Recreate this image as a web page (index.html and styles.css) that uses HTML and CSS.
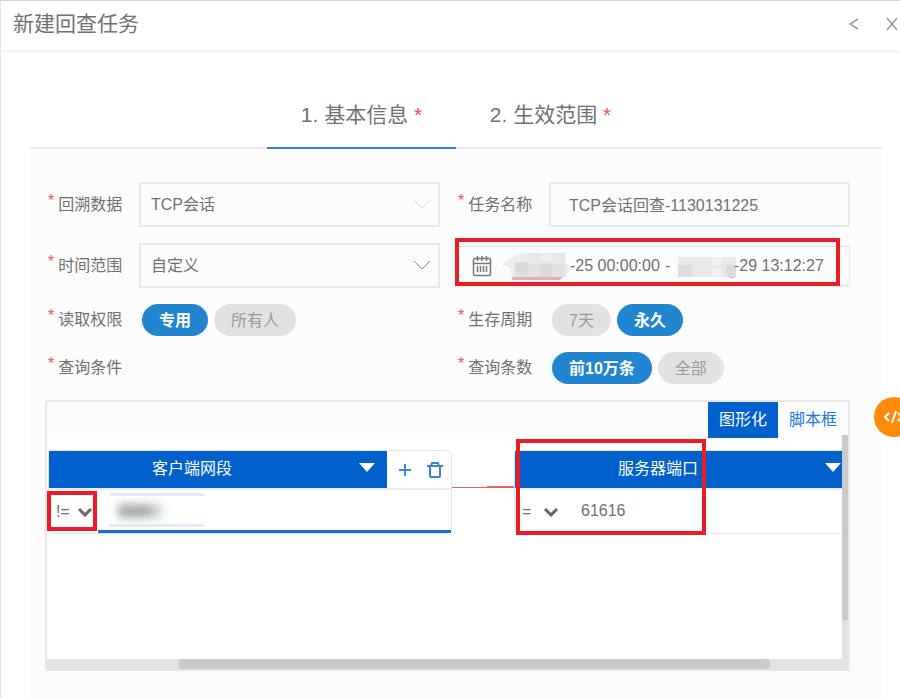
FILE: index.html
```html
<!DOCTYPE html>
<html lang="zh-CN">
<head>
    <meta charset="UTF-8">
    <meta name="viewport" content="width=device-width, initial-scale=1.0">
    <title>新建回查任务</title>
    <link rel="stylesheet" href="styles.css">
</head>
<body>
    <header class="header">
        <h1>新建回查任务</h1>
        <button type="button" class="icon-btn" aria-label="返回">
            <svg width="12" height="14" viewBox="0 0 12 14"><path d="M10 2L2 7l8 5"/></svg>
        </button>
        <button type="button" class="icon-btn" aria-label="关闭">
            <svg width="12" height="14" viewBox="0 0 12 14"><path d="M1 1l10 12M11 1L1 13"/></svg>
        </button>
    </header>

    <main class="content">
        <nav class="tabs">
            <button type="button" class="tab active">1. 基本信息 <i>*</i></button>
            <button type="button" class="tab">2. 生效范围 <i>*</i></button>
        </nav>

        <form class="panel">
            <div class="fields">
                <div class="field">
                    <label for="source"><i>*</i>回溯数据</label>
                    <div class="select disabled">
                        <select id="source"><option>TCP会话</option></select>
                        <svg width="16" height="9" viewBox="0 0 16 9"><path d="M0 0l8 8 8-8"/></svg>
                    </div>
                </div>
                <div class="field">
                    <label for="name"><i>*</i>任务名称</label>
                    <input type="text" id="name" class="text-input" value="TCP会话回查-1130131225">
                </div>

                <div class="field">
                    <label for="range"><i>*</i>时间范围</label>
                    <div class="select">
                        <select id="range"><option>自定义</option></select>
                        <svg width="16" height="9" viewBox="0 0 16 9"><path d="M0 0l8 8 8-8"/></svg>
                    </div>
                </div>
                <div class="date-range">
                    <svg class="calendar" width="20" height="22" viewBox="0 0 20 22">
                        <rect x="1.5" y="3.5" width="17" height="17" rx="1.5"/>
                        <path d="M1.5 8.5h17M5.5 1v5M10 1v5M14.5 1v5M5.5 11v6M8.5 11v6M11.5 11v6M14.5 11v6"/>
                    </svg>
                    <svg class="mask" width="70" height="30" viewBox="0 0 70 30">
                        <path fill="#ededee" d="M0 14L12 5 22 2h42v12l5 3-6 9H10l-3-10z"/>
                        <path fill="#e2e2e3" d="M13 11h50v15H13z"/>
                        <path fill="#dbdbdc" d="M13 11h13v12H13zM38 13h12v13H38z"/>
                        <path fill="#e7e7e8" d="M26 2h12v11H26zM50 2h12v11H50z"/>
                        <path fill="#f2a9ae" d="M10 26h51l-3 3H10z"/>
                    </svg>
                    <input type="text" value="-25 00:00:00" aria-label="开始时间">
                    <span>-</span>
                    <svg class="mask" width="60" height="30" viewBox="0 0 60 30">
                        <path fill="#e8e8e9" d="M2 6h58v20H2z"/>
                        <path fill="#dddddf" d="M2 14h14v12H2zM50 14h10v12H50z"/>
                        <path fill="#f1f1f2" d="M36 6h10v8H36zM36 18h10v8H36z"/>
                        <path fill="#f2a9ae" d="M53 26h5v1h-5z"/>
                    </svg>
                    <input type="text" value="-29 13:12:27" aria-label="结束时间">
                    <div class="mark mark-date"></div>
                </div>

                <div class="field">
                    <span class="label"><i>*</i>读取权限</span>
                    <div class="pills">
                        <button type="button" class="pill on">专用</button>
                        <button type="button" class="pill">所有人</button>
                    </div>
                </div>
                <div class="field">
                    <span class="label"><i>*</i>生存周期</span>
                    <div class="pills">
                        <button type="button" class="pill">7天</button>
                        <button type="button" class="pill on">永久</button>
                    </div>
                </div>

                <div class="field">
                    <span class="label"><i>*</i>查询条件</span>
                </div>
                <div class="field">
                    <span class="label"><i>*</i>查询条数</span>
                    <div class="pills">
                        <button type="button" class="pill on">前10万条</button>
                        <button type="button" class="pill">全部</button>
                    </div>
                </div>
            </div>

            <section class="editor">
                <div class="editor-bar">
                    <button type="button" class="mode on">图形化</button>
                    <button type="button" class="mode">脚本框</button>
                </div>
                <div class="editor-body">
                    <div class="canvas">
                        <div class="node">
                            <div class="node-head">
                                <button type="button" class="node-title">
                                    <span>客户端网段</span>
                                    <svg width="16" height="9" viewBox="0 0 16 9"><path d="M0 0h16L8 9z"/></svg>
                                </button>
                                <div class="node-actions">
                                    <button type="button" aria-label="添加">
                                        <svg width="12" height="12" viewBox="0 0 12 12"><path d="M6 0v12M0 6h12"/></svg>
                                    </button>
                                    <button type="button" aria-label="删除">
                                        <svg width="16" height="18" viewBox="0 0 16 18"><path d="M0 5h16M4 5l1-3h6l1 3M3 5v10q0 1 1 1h8q1 0 1-1V5"/></svg>
                                    </button>
                                </div>
                            </div>
                            <div class="node-row focus">
                                <div class="operator">
                                    <select aria-label="运算符"><option>!=</option></select>
                                    <svg width="14" height="9" viewBox="0 0 14 9"><path d="M1 1l6 6 6-6"/></svg>
                                    <div class="mark mark-op"></div>
                                </div>
                                <div class="value">
                                    <input type="text" aria-label="客户端网段">
                                    <div class="smudge"></div>
                                </div>
                            </div>
                        </div>

                        <svg class="link" width="62" height="4" viewBox="0 0 62 4">
                            <path d="M0 2.500h36" stroke-width="1"/>
                            <path d="M35 2h27" stroke-width="2"/>
                        </svg>

                        <div class="node">
                            <div class="node-head">
                                <button type="button" class="node-title">
                                    <span>服务器端口</span>
                                    <svg width="16" height="9" viewBox="0 0 16 9"><path d="M0 0h16L8 9z"/></svg>
                                </button>
                            </div>
                            <div class="node-row">
                                <div class="operator">
                                    <select aria-label="运算符"><option>=</option></select>
                                    <svg width="14" height="9" viewBox="0 0 14 9"><path d="M1 1l6 6 6-6"/></svg>
                                </div>
                                <div class="value">
                                    <input type="text" value="61616" aria-label="服务器端口">
                                </div>
                            </div>
                            <div class="mark mark-port"></div>
                        </div>
                    </div>
                    <div class="scroll-y"><div class="thumb"></div></div>
                </div>
                <div class="scroll-x"><div class="thumb"></div></div>
            </section>
        </form>
    </main>

    <button type="button" class="code-btn" aria-label="代码">
        <svg width="20" height="14" viewBox="0 0 20 14"><path d="M5 3L1 7l4 4M12 1L8 13M14 3l4 4-4 4"/></svg>
    </button>
</body>
</html>
```

FILE: styles.css
```css
* {
    box-sizing: border-box;
}
body {
    display: flex;
    flex-direction: column;
    min-height: 100vh;
    margin: 0;
    overflow: hidden;
    border-top: 1px solid #d2d2d8;
    border-left: 1px solid #e4e4e6;
    background-color: #fff;
    color: #707070;
    font-family: "Liberation Sans", "Noto Sans CJK SC", sans-serif;
    font-size: 16px;
}
button, input, select {
    margin: 0;
    padding: 0;
    border: none;
    outline: none;
    background: none;
    color: inherit;
    font: inherit;
}
button {
    cursor: pointer;
}
i {
    color: #ff4d4f;
    font-style: normal;
}
svg {
    display: block;
    flex: none;
    fill: none;
}

/* header */
.header {
    display: flex;
    align-items: center;
    gap: 26px;
    height: 49px;
    padding: 0 2px 4px 12px;
    box-shadow: 0 1px 4px rgba(0, 0, 0, 0.1);
}
.header h1 {
    flex: 1;
    margin: 0;
    font-size: 21px;
    font-weight: normal;
    line-height: 30px;
}
.icon-btn svg {
    stroke: #999;
    stroke-width: 1.5;
}

/* steps */
.content {
    display: flex;
    flex: 1;
    flex-direction: column;
    padding: 50px 18px 0 29px;
}
.tabs {
    display: flex;
    justify-content: center;
    box-shadow: inset 0 -2px #ebebeb;
}
.tab {
    width: 189px;
    padding-bottom: 17px;
    border-bottom: 2px solid transparent;
    font-size: 21px;
    line-height: 30px;
}
.tab.active {
    border-color: #3a80d6;
}

/* form */
.panel {
    flex: 1;
    padding: 33px 32px 27px 15px;
    background-color: #fcfcfc;
}
.fields {
    display: grid;
    grid-template-columns: 1fr 1fr;
    gap: 16px 18px;
    padding-left: 3px;
}
.field {
    display: flex;
    align-items: center;
    gap: 15px;
    min-height: 32px;
}
.field label, .label {
    display: flex;
    gap: 4px;
    width: 76px;
    line-height: 24px;
    white-space: nowrap;
}
.field i {
    line-height: 16px;
}
.select {
    position: relative;
    flex: 1;
}
.select select {
    display: block;
    width: 100%;
    height: 45px;
    padding: 0 40px 1px 10px;
    border: 2px solid #e8e8e8;
    appearance: none;
}
.select svg {
    position: absolute;
    top: 18px;
    right: 10px;
    stroke: #8c8c8c;
    pointer-events: none;
}
.select.disabled svg {
    stroke: #d8d8d8;
}
.text-input {
    flex: 1;
    min-width: 0;
    height: 45px;
    padding: 0 18px 1px;
    border: 2px solid #e8e8e8;
    border-radius: 2px;
}
.date-range {
    position: relative;
    display: flex;
    align-self: center;
    align-items: center;
    height: 40px;
    padding-left: 14px;
    border: 1px solid #e4e4e4;
    border-left: none;
    box-shadow: 0 1px 2px rgba(0, 0, 0, 0.06);
}
.date-range input {
    width: 95px;
}
.date-range span {
    width: 11px;
}
.calendar {
    margin-right: 10px;
    stroke: #777;
    stroke-width: 1.5;
}
.mask {
    margin-right: -2px;
}
.pills {
    display: flex;
    gap: 6px;
    padding-left: 3px;
}
.pill {
    height: 32px;
    padding: 0 17px 2px;
    border-radius: 16px;
    background-color: #e2e2e2;
    color: #999;
    white-space: nowrap;
}
.pill.on {
    background-color: #2185d0;
    color: #fff;
    font-weight: bold;
}

/* query editor */
.editor {
    margin-top: 16px;
    border: 2px solid #e8e8e8;
    border-bottom-width: 1px;
}
.editor-bar {
    display: flex;
    justify-content: flex-end;
    height: 33px;
}
.mode {
    width: 70px;
    height: 36px;
    padding-bottom: 4px;
    color: #1677e0;
}
.mode.on {
    position: relative;
    background-color: #0060cc;
    color: #fff;
}
.editor-body {
    display: flex;
    height: 224px;
    background-color: #fff;
}
.canvas {
    display: flex;
    flex: 1;
    align-items: flex-start;
    min-width: 0;
    padding: 15px 0 0 1px;
    overflow: hidden;
}
.node {
    position: relative;
    flex: none;
    width: 404px;
    border: 1px solid #e6e6e6;
    border-radius: 6px;
}
.node-head {
    display: flex;
    align-items: center;
    border-bottom: 2px solid #ececec;
}
.node-title {
    display: flex;
    align-items: center;
    width: 338px;
    height: 37px;
    background-color: #0060cc;
    color: #fff;
}
.node-title span {
    width: 286px;
    margin-right: 24px;
    padding-bottom: 6px;
}
.node-title svg {
    margin-bottom: 4px;
    fill: #fff;
}
.node-actions {
    display: flex;
    align-items: center;
    gap: 16px;
    padding-left: 12px;
}
.node-actions svg {
    stroke: #3b82d8;
    stroke-width: 2;
}
.node-row {
    display: flex;
    height: 43px;
}
.operator {
    position: relative;
    width: 49px;
}
.operator select {
    width: 100%;
    height: 42px;
    padding-left: 7px;
    appearance: none;
}
.operator svg {
    position: absolute;
    top: 18px;
    right: 6px;
    stroke: #666;
    stroke-width: 3;
    pointer-events: none;
}
.value {
    position: relative;
    flex: 1;
    border-bottom: 3px solid transparent;
}
.value input {
    width: 100%;
    height: 42px;
    padding-left: 17px;
}
.focus .value {
    border-color: #1a6fd4;
}
.smudge {
    position: absolute;
    top: 3px;
    left: 12px;
    width: 94px;
    height: 34px;
    border: solid #e2ebf7;
    border-width: 3px 0;
}
.smudge::before {
    content: "";
    position: absolute;
    top: 8px;
    left: 8px;
    width: 46px;
    height: 14px;
    background: linear-gradient(90deg, #aaa 60%, #eee);
    filter: blur(4px);
}
.link {
    margin-top: 35px;
    stroke: #e06666;
}

/* scrollbars */
.scroll-y {
    width: 6px;
    background-color: #e2e2e2;
}
.scroll-y .thumb {
    height: 83%;
    border-radius: 0 0 3px 3px;
    background-color: #cacaca;
}
.scroll-x {
    height: 11px;
    padding: 0 78px 0 132px;
    background-color: #e2e2e2;
}
.scroll-x .thumb {
    height: 10px;
    border-radius: 4px;
    background-color: #cacaca;
}

/* red highlight frames */
.mark {
    position: absolute;
    border: 4px solid #ed1c24;
    pointer-events: none;
}
.mark-date {
    top: -9px;
    right: 9px;
    left: -3px;
    height: 48px;
}
.mark-op {
    top: 1px;
    left: -2px;
    width: 50px;
    height: 40px;
}
.mark-port {
    top: -12px;
    left: 1px;
    width: 190px;
    height: 96px;
}

/* floating code button */
.code-btn {
    position: fixed;
    top: 397px;
    right: -14px;
    display: flex;
    align-items: center;
    width: 40px;
    height: 40px;
    padding-left: 10px;
    border-radius: 20px;
    background-color: #ff8a0c;
}
.code-btn svg {
    stroke: #fff;
    stroke-width: 2;
}
```
